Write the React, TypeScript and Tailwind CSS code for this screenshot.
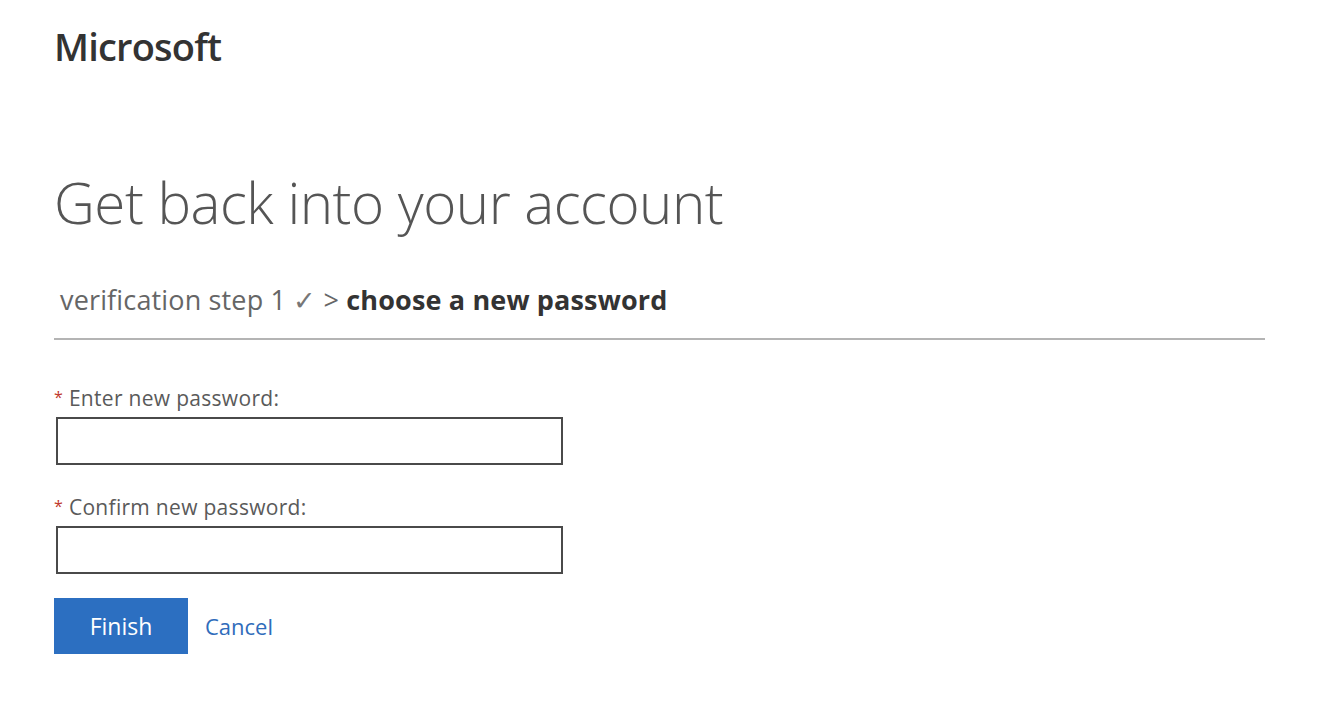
export default function App() {
  return (
    <div className="w-[1326px] h-[724px] bg-white overflow-hidden" style={{ fontFamily: '"Open Sans", "Noto Sans", sans-serif' }}>
      <div className="pl-[54px] pt-[22px]">
        <div className="text-[38px] font-semibold leading-[48px] tracking-[-0.8px] text-[#333333]">Microsoft</div>
      </div>
      <div className="pl-[54px] pt-[101px] pr-[60px]">
        <h1 className="text-[56.5px] font-light leading-[64px] text-[#555555] tracking-[-0.5px]">Get back into your account</h1>
        <div className="mt-[47px] pl-[6px] text-[27px] leading-[36px] text-[#666666] tracking-[0.15px]">
          verification step 1 <span className="text-[#777]">✓</span> &gt; <span className="font-bold text-[#333333]">choose a new password</span>
        </div>
        <div className="mt-[20px] h-[2px] w-[1211px] bg-[#b4b4b4]" />
        <div className="mt-[43px] text-[21px] leading-[28px] text-[#5a5a5a] tracking-[0.3px]">
          <span className="text-[#c0392b] text-[16px] align-[3px]">*</span> Enter new password:
        </div>
        <div className="mt-[5px] ml-[2px] h-[48px] w-[507px] border-2 border-[#4a4a4a] bg-white" />
        <div className="mt-[27px] text-[21px] leading-[28px] text-[#5a5a5a] tracking-[0.3px]">
          <span className="text-[#c0392b] text-[16px] align-[3px]">*</span> Confirm new password:
        </div>
        <div className="mt-[5px] ml-[2px] h-[48px] w-[507px] border-2 border-[#4a4a4a] bg-white" />
        <div className="mt-[24px] flex items-center gap-[17px]">
          <button className="h-[56px] w-[134px] bg-[#2c6fc1] text-white text-[23px] leading-none">Finish</button>
          <span className="text-[22px] text-[#2f6cbb]">Cancel</span>
        </div>
      </div>
    </div>
  );
}
